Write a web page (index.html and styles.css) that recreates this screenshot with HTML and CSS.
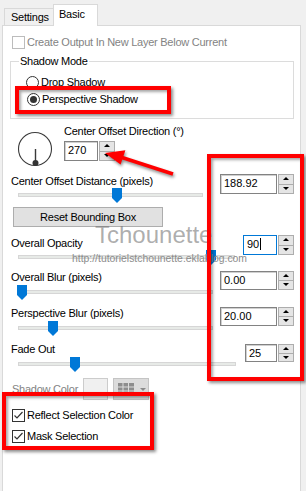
FILE: index.html
```html
<!DOCTYPE html>
<html lang="en">
<head>
  <meta charset="UTF-8" />
  <title>Perspective Shadow</title>
  <link rel="stylesheet" href="styles.css">
</head>
<body>
  <div class="window">
    <div class="tabs">
      <div class="tab">Settings</div>
      <div class="tab tab-active">Basic</div>
    </div>

    <div class="panel">
      <div class="check check-off row-create"><span class="box"></span>Create Output In New Layer Below Current</div>

      <fieldset class="group">
        <legend>Shadow Mode</legend>
        <div class="radio radio-first"><span class="dot"></span>Drop Shadow</div>
        <div class="radio radio-on"><span class="dot"></span>Perspective Shadow</div>
      </fieldset>

      <div class="direction">
        <svg class="dial" width="36" height="36" viewBox="0 0 36 36">
          <circle cx="18" cy="18" r="16.5" fill="none" stroke="#3a3a3a" stroke-width="1.1"/>
          <line x1="18.5" y1="18" x2="18.5" y2="32" stroke="#3a3a3a" stroke-width="1.4"/>
          <circle cx="18.5" cy="32" r="3" fill="#333"/>
        </svg>
        <div class="dir-right">
          <div class="label">Center Offset Direction (°)</div>
          <div class="spin spin-dir">
            <div class="spin-input w34">270</div>
            <div class="spin-btns"><span class="up"></span><span class="down"></span></div>
          </div>
        </div>
      </div>

      <div class="ctl ctl-distance">
        <div class="ctl-main">
          <div class="label">Center Offset Distance (pixels)</div>
          <div class="track w185"><span class="thumb" style="left:93px"></span></div>
        </div>
        <div class="spin">
          <div class="spin-input w57">188.92</div>
          <div class="spin-btns"><span class="up"></span><span class="down"></span></div>
        </div>
      </div>

      <button class="reset">Reset Bounding Box</button>

      <div class="ctl ctl-opacity">
        <div class="ctl-main">
          <div class="label">Overall Opacity</div>
          <div class="track w217"><span class="thumb" style="left:187px"></span></div>
        </div>
        <div class="spin spin-hi">
          <div class="spin-input spin-focus w34">90<span class="caret"></span></div>
          <div class="spin-btns"><span class="up"></span><span class="down"></span></div>
        </div>
      </div>

      <div class="ctl ctl-blur">
        <div class="ctl-main">
          <div class="label">Overall Blur (pixels)</div>
          <div class="track w195"><span class="thumb" style="left:-2px"></span></div>
        </div>
        <div class="spin spin-lo">
          <div class="spin-input w57">0.00</div>
          <div class="spin-btns"><span class="up"></span><span class="down"></span></div>
        </div>
      </div>

      <div class="ctl ctl-persp">
        <div class="ctl-main">
          <div class="label">Perspective Blur (pixels)</div>
          <div class="track w195"><span class="thumb" style="left:29px"></span></div>
        </div>
        <div class="spin spin-lo">
          <div class="spin-input w57">20.00</div>
          <div class="spin-btns"><span class="up"></span><span class="down"></span></div>
        </div>
      </div>

      <div class="ctl ctl-fade">
        <div class="ctl-main">
          <div class="label">Fade Out</div>
          <div class="track w218"><span class="thumb" style="left:51px"></span></div>
        </div>
        <div class="spin spin-lo">
          <div class="spin-input w32">25</div>
          <div class="spin-btns"><span class="up"></span><span class="down"></span></div>
        </div>
      </div>

      <div class="shadow-row">
        <span>Shadow Color</span>
        <span class="swatch"></span>
        <span class="picker">
          <svg width="16" height="12" viewBox="0 0 16 12">
            <rect x="0" y="0" width="16" height="12" fill="#8d8d8d"/>
            <path d="M5 0v12M10.5 0v12M0 4h16M0 8h16" stroke="#dcdcdc" stroke-width="1"/>
          </svg>
          <span class="caret-down"></span>
        </span>
      </div>

      <div class="check row-reflect">
        <span class="box"><svg width="11" height="11" viewBox="0 0 11 11"><polyline points="1.5,5.5 4,8 9.5,2" fill="none" stroke="#333" stroke-width="1.2"/></svg></span>Reflect Selection Color
      </div>
      <div class="check row-mask">
        <span class="box"><svg width="11" height="11" viewBox="0 0 11 11"><polyline points="1.5,5.5 4,8 9.5,2" fill="none" stroke="#333" stroke-width="1.2"/></svg></span>Mask Selection
      </div>
    </div>

    <div class="wm-name">Tchounette</div>
    <div class="wm-url">http://tutorielstchounette.eklablog.com</div>

    <div class="mark mark-mode"></div>
    <div class="mark mark-values"></div>
    <div class="mark mark-checks"></div>

    <svg class="arrow" width="84" height="44" viewBox="0 0 84 44">
      <line x1="77" y1="34" x2="26" y2="17.5" stroke="#f00" stroke-width="3.6"/>
      <polygon points="9,13 29.4,10.2 24.6,24.4" fill="#f00"/>
    </svg>
  </div>
</body>
</html>
```

FILE: styles.css
```css
body {
  margin: 0;
  background: #f0f0f0;
  font-family: "Liberation Sans", Arial, sans-serif;
  font-size: 11px;
  letter-spacing: -0.25px;
  color: #000;
}
.window {
  position: relative;
  width: 306px;
  height: 491px;
  overflow: hidden;
}

/* tabs */
.tabs {
  display: flex;
  align-items: flex-end;
  height: 25px;
  padding-left: 4px;
}
.tab {
  box-sizing: border-box;
  width: 49px;
  height: 17px;
  padding-left: 6px;
  border: 1px solid #d9d9d9;
  border-right: none;
  border-bottom: none;
  line-height: 16px;
}
.tab-active {
  position: relative;
  z-index: 1;
  width: 45px;
  height: 22px;
  margin-bottom: -1px;
  padding-left: 5px;
  border-right: 1px solid #d9d9d9;
  background: #fff;
  line-height: 19px;
}
.panel {
  box-sizing: border-box;
  width: 299px;
  height: 466px;
  margin-left: 2px;
  border: 1px solid #d9d9d9;
  border-bottom: none;
  background: #fff;
}

/* checkboxes, radios */
.check,
.radio {
  display: flex;
  align-items: center;
  height: 13px;
  line-height: 13px;
  white-space: nowrap;
}
.check {
  margin-left: 9px;
}
.box {
  box-sizing: border-box;
  flex: none;
  display: flex;
  align-items: center;
  justify-content: center;
  width: 13px;
  height: 13px;
  margin-right: 2px;
  border: 1px solid #333;
  background: #fff;
}
.check-off {
  color: #838383;
}
.check-off .box {
  border-color: #bcbcbc;
}
.row-create {
  margin-top: 10px;
}
.row-reflect {
  margin-top: 9px;
}
.row-mask {
  margin-top: 8px;
}

.group {
  box-sizing: border-box;
  width: 284px;
  height: 64px;
  min-width: 0;
  margin: 6px 0 0 7px;
  padding: 0 0 0 8px;
  border: 1px solid #dcdcdc;
}
.group legend {
  padding: 0 1px;
  line-height: 13px;
}
.radio {
  margin: 4px 0 0 8px;
}
.radio-first {
  margin: 8px 0 0 7px;
}
.dot {
  position: relative;
  box-sizing: border-box;
  flex: none;
  width: 13px;
  height: 13px;
  margin-right: 2px;
  border: 1px solid #333;
  border-radius: 50%;
  background: #fff;
}
.radio-on .dot::after {
  content: "";
  position: absolute;
  left: 2px;
  top: 2px;
  width: 7px;
  height: 7px;
  border-radius: 50%;
  background: #333;
}

/* direction */
.direction {
  display: flex;
  margin-top: 5px;
}
.dial {
  flex: none;
  margin: 7px 0 0 14px;
}
.dir-right {
  margin-left: 11px;
}
.label {
  line-height: 14px;
  white-space: nowrap;
}
.spin-dir {
  margin-top: 3px;
}

/* slider rows */
.ctl {
  display: flex;
  margin-left: 8px;
  padding-right: 6px;
}
.ctl-main {
  flex: 1;
}
.ctl-distance {
  margin-top: 7px;
}
.ctl-opacity {
  margin-top: 9px;
}
.ctl-blur {
  margin-top: 11px;
}
.ctl-persp,
.ctl-fade {
  margin-top: 12px;
}
.track {
  position: relative;
  box-sizing: border-box;
  height: 4px;
  margin: 5px 0 0 7px;
  border: 1px solid #d6d6d6;
  background: #e7eae7;
}
.ctl-blur .track,
.ctl-persp .track,
.ctl-fade .track {
  margin-top: 6px;
}
.w185 { width: 185px; }
.w195 { width: 195px; }
.w217 { width: 217px; }
.w218 { width: 218px; }
.thumb {
  position: absolute;
  top: -6px;
  width: 10px;
  height: 15px;
  background: #0078d7;
  clip-path: polygon(0 0, 100% 0, 100% 66%, 50% 100%, 0 66%);
}

/* spin boxes */
.spin {
  display: flex;
  flex: none;
  gap: 1px;
  height: 20px;
  margin-left: auto;
}
.spin-hi {
  margin-top: -1px;
}
.spin-lo {
  margin-top: 1px;
  height: 19px;
}
.ctl-fade .spin {
  margin-top: 2px;
  height: 18px;
}
.spin-input {
  box-sizing: border-box;
  padding-left: 3px;
  border: 1px solid #828282;
  box-shadow: inset 1px 1px 0 #d0d0d0;
  background: #fff;
  line-height: 17px;
  letter-spacing: 0;
}
.spin-focus {
  border-color: #0078d7;
  box-shadow: none;
}
.caret {
  display: inline-block;
  width: 1px;
  height: 12px;
  margin-left: 1px;
  vertical-align: -2px;
  background: #000;
}
.w32 { width: 32px; }
.w34 { width: 34px; }
.w57 { width: 57px; }
.spin-btns {
  display: flex;
  flex-direction: column;
  width: 16px;
}
.spin-btns span {
  position: relative;
  flex: 1;
  border: 1px solid #adadad;
  background: #e5e5e5;
}
.spin-btns .down {
  border-top: none;
}
.spin-btns span::after {
  content: "";
  position: absolute;
  left: 4px;
  top: 2px;
  border-left: 3px solid transparent;
  border-right: 3px solid transparent;
}
.spin-btns .up::after {
  border-bottom: 3px solid #000;
}
.spin-btns .down::after {
  border-top: 3px solid #000;
}

.reset {
  display: block;
  width: 150px;
  height: 20px;
  margin: 10px 0 0 10px;
  padding: 0;
  border: 1px solid #adadad;
  background: #e1e1e1;
  font: inherit;
  letter-spacing: inherit;
  color: #000;
}

/* shadow color */
.shadow-row {
  display: flex;
  align-items: center;
  height: 22px;
  margin: 12px 0 0 9px;
  color: #838383;
}
.swatch {
  box-sizing: border-box;
  width: 25px;
  height: 22px;
  margin-left: 5px;
  border: 1px solid #cccccc;
  background: #f0f0f0;
}
.picker {
  box-sizing: border-box;
  display: flex;
  align-items: center;
  width: 36px;
  height: 22px;
  margin-left: 5px;
  padding-left: 4px;
  border: 1px solid #c4c4c4;
  background: #dcdcdc;
}
.caret-down {
  margin-left: 6px;
  border-left: 3px solid transparent;
  border-right: 3px solid transparent;
  border-top: 3px solid #8a8a8a;
}

/* watermark */
.wm-name {
  position: absolute;
  left: 95px;
  top: 223px;
  font-size: 24px;
  line-height: 24px;
  letter-spacing: 0;
  color: rgba(120, 120, 120, 0.6);
}
.wm-url {
  position: absolute;
  left: 72px;
  top: 254px;
  font-size: 10.4px;
  line-height: 10px;
  letter-spacing: 0;
  color: #8c8c8c;
}

/* red annotations */
.mark {
  position: absolute;
  box-sizing: border-box;
  border: 4px solid #f00;
  box-shadow: 2px 2px 3px rgba(0, 0, 0, 0.45), inset 2px 2px 3px rgba(0, 0, 0, 0.35);
}
.mark-mode {
  left: 15px;
  top: 86px;
  width: 156px;
  height: 28px;
}
.mark-values {
  left: 207px;
  top: 154px;
  width: 97px;
  height: 227px;
}
.mark-checks {
  left: 2px;
  top: 392px;
  width: 152px;
  height: 58px;
}
.arrow {
  position: absolute;
  left: 96px;
  top: 140px;
  filter: drop-shadow(1px 2px 1.5px rgba(0, 0, 0, 0.45));
}
```
